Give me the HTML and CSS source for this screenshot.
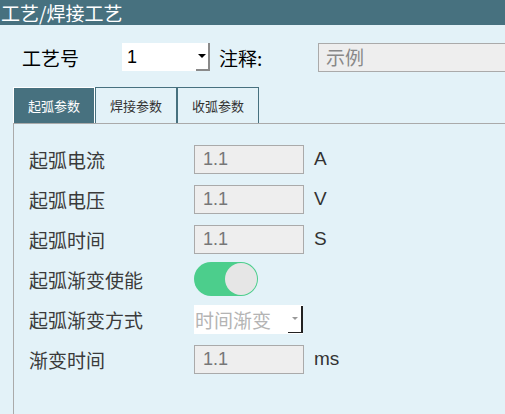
FILE: index.html
```html
<!DOCTYPE html>
<html>
<head>
  <meta charset="UTF-8">
  <title>工艺/焊接工艺</title>
  <link rel="stylesheet" href="styles.css">
</head>
<body>
  <div class="titlebar">工艺/焊接工艺</div>
  <div class="top-row">
    <span class="top-label">工艺号</span>
    <div class="select">
      <span>1</span>
      <span class="select-btn"><span class="arrow"></span></span>
    </div>
    <span class="note-label">注释:</span>
    <div class="note-input">示例</div>
  </div>
  <div class="tabs">
    <div class="tab active">起弧参数</div>
    <div class="tab">焊接参数</div>
    <div class="tab">收弧参数</div>
  </div>
  <div class="panel">
    <div class="row">
      <span class="label">起弧电流</span>
      <div class="field">1.1</div>
      <span class="unit">A</span>
    </div>
    <div class="row">
      <span class="label">起弧电压</span>
      <div class="field">1.1</div>
      <span class="unit">V</span>
    </div>
    <div class="row">
      <span class="label">起弧时间</span>
      <div class="field">1.1</div>
      <span class="unit">S</span>
    </div>
    <div class="row">
      <span class="label">起弧渐变使能</span>
      <div class="switch"><div class="knob"></div></div>
    </div>
    <div class="row">
      <span class="label">起弧渐变方式</span>
      <div class="combo">
        <span>时间渐变</span>
        <span class="combo-btn"><span class="arrow gray"></span></span>
      </div>
    </div>
    <div class="row">
      <span class="label">渐变时间</span>
      <div class="field">1.1</div>
      <span class="unit">ms</span>
    </div>
  </div>
</body>
</html>
```

FILE: styles.css
```css
body {
  margin: 0;
  background: #e3f2f8;
  font-family: "Noto Sans CJK SC", "Liberation Sans", sans-serif;
  color: #000;
  overflow: hidden;
}
.titlebar {
  height: 25px;
  line-height: 25px;
  background: #47717f;
  color: #fff;
  font-size: 19px;
  padding-left: 1px;
  white-space: nowrap;
}
.top-row {
  display: flex;
  align-items: center;
  margin-top: 18px;
  height: 28px;
  font-size: 19px;
}
.top-label {
  margin-left: 22px;
  width: 100px;
}
.select {
  width: 88px;
  height: 28px;
  background: #fff;
  display: flex;
  align-items: center;
  justify-content: space-between;
  font-family: "Liberation Sans", sans-serif;
  font-size: 18px;
  padding-left: 5px;
  box-sizing: border-box;
}
.select-btn {
  width: 14px;
  height: 28px;
  box-sizing: border-box;
  border-right: 2px solid #8a8a8a;
  border-bottom: 2px solid #8a8a8a;
  display: flex;
  align-items: center;
  justify-content: center;
}
.arrow {
  width: 0;
  height: 0;
  border-left: 4px solid transparent;
  border-right: 4px solid transparent;
  border-top: 4px solid #000;
}
.arrow.gray {
  border-top-color: #999;
  border-left-width: 3px;
  border-right-width: 3px;
  border-top-width: 3px;
}
.note-label {
  margin-left: 9px;
  width: 99px;
}
.note-input {
  flex: 1;
  height: 29px;
  box-sizing: border-box;
  background: #eeeeee;
  border: 1px solid #aaa;
  border-right: none;
  color: #888;
  font-size: 19px;
  line-height: 26px;
  padding-left: 7px;
}
.tabs {
  display: flex;
  margin: 16px 0 0 13px;
}
.tab {
  width: 82px;
  height: 36px;
  box-sizing: border-box;
  border: 1px solid #47717f;
  border-bottom: none;
  font-size: 13px;
  color: #333;
  display: flex;
  align-items: center;
  justify-content: center;
}
.tab.active {
  background: #47717f;
  border: 1px solid #fff;
  border-bottom: none;
  color: #fff;
}
.panel {
  margin-left: 13px;
  border-left: 1px solid #aaa;
  border-top: 1px solid #aaa;
  padding: 15px 0 0 15px;
  height: 290px;
}
.row {
  display: flex;
  align-items: center;
  height: 40px;
  font-size: 19px;
  color: #3a3a3a;
}
.label {
  width: 165px;
}
.field {
  width: 110px;
  height: 29px;
  box-sizing: border-box;
  background: #eeeeee;
  border: 1px solid #aaa;
  color: #777;
  font-family: "Liberation Sans", sans-serif;
  font-size: 18px;
  line-height: 27px;
  padding-left: 8px;
}
.unit {
  margin-left: 10px;
  font-family: "Liberation Sans", sans-serif;
  font-size: 19px;
  color: #333;
}
.switch {
  width: 64px;
  height: 34px;
  border-radius: 17px;
  background: #4cce8c;
  display: flex;
  justify-content: flex-end;
  align-items: center;
  padding-right: 1px;
  box-sizing: border-box;
}
.knob {
  width: 32px;
  height: 32px;
  border-radius: 50%;
  background: #e6e6e6;
}
.combo {
  width: 109px;
  height: 29px;
  box-sizing: border-box;
  background: #fff;
  display: flex;
  align-items: center;
  justify-content: space-between;
  color: #b4b4b4;
  font-size: 19px;
  padding-left: 1px;
  white-space: nowrap;
}
.combo-btn {
  width: 15px;
  height: 27px;
  flex-shrink: 0;
  box-sizing: border-box;
  border-right: 2px solid #222;
  border-bottom: 1px solid #222;
  display: flex;
  align-items: center;
  justify-content: center;
}
```
